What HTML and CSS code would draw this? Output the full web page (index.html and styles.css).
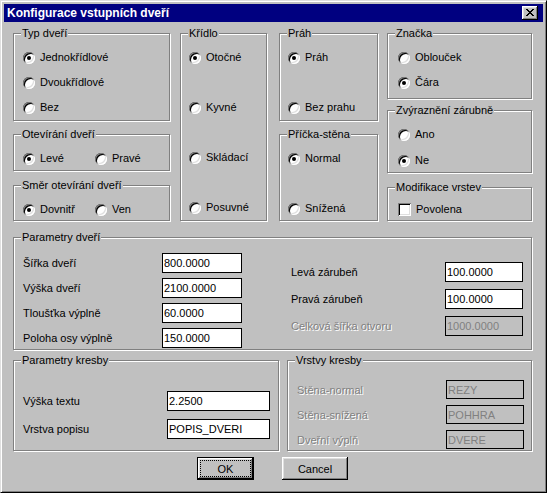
FILE: index.html
```html
<!DOCTYPE html>
<html lang="cs">
<head>
<meta charset="utf-8">
<title>Konfigurace vstupních dveří</title>
<link rel="stylesheet" href="styles.css">
</head>
<body>
<div class="window">
  <div class="titlebar">
    <span class="title">Konfigurace vstupních dveří</span>
    <span class="close">
      <svg width="8" height="7" viewBox="0 0 8 7" shape-rendering="crispEdges">
        <rect x="0" y="0" width="2" height="1"/><rect x="6" y="0" width="2" height="1"/>
        <rect x="1" y="1" width="2" height="1"/><rect x="5" y="1" width="2" height="1"/>
        <rect x="2" y="2" width="4" height="1"/>
        <rect x="3" y="3" width="2" height="1"/>
        <rect x="2" y="4" width="4" height="1"/>
        <rect x="1" y="5" width="2" height="1"/><rect x="5" y="5" width="2" height="1"/>
        <rect x="0" y="6" width="2" height="1"/><rect x="6" y="6" width="2" height="1"/>
      </svg>
    </span>
  </div>

  <div class="content">
    <div class="top">
      <div class="col col1">
        <div class="group g-typ">
          <div class="gt">Typ dveří</div>
          <div class="opts">
            <div class="opt"><span class="radio on"></span>Jednokřídlové</div>
            <div class="opt"><span class="radio"></span>Dvoukřídlové</div>
            <div class="opt"><span class="radio"></span>Bez</div>
          </div>
        </div>
        <div class="group g-otev">
          <div class="gt">Otevírání dveří</div>
          <div class="opts row">
            <div class="opt"><span class="radio on"></span>Levé</div>
            <div class="opt"><span class="radio"></span>Pravé</div>
          </div>
        </div>
        <div class="group g-smer">
          <div class="gt">Směr otevírání dveří</div>
          <div class="opts row">
            <div class="opt"><span class="radio on"></span>Dovnitř</div>
            <div class="opt"><span class="radio"></span>Ven</div>
          </div>
        </div>
      </div>

      <div class="group g-kridlo">
        <div class="gt">Křídlo</div>
        <div class="opts wide narrow">
          <div class="opt"><span class="radio on"></span>Otočné</div>
          <div class="opt"><span class="radio"></span>Kyvné</div>
          <div class="opt"><span class="radio"></span>Skládací</div>
          <div class="opt"><span class="radio"></span>Posuvné</div>
        </div>
      </div>

      <div class="col col3">
        <div class="group g-prah">
          <div class="gt">Práh</div>
          <div class="opts wide narrow">
            <div class="opt"><span class="radio on"></span>Práh</div>
            <div class="opt"><span class="radio"></span>Bez prahu</div>
          </div>
        </div>
        <div class="group g-pricka">
          <div class="gt">Příčka-stěna</div>
          <div class="opts wide narrow">
            <div class="opt"><span class="radio on"></span>Normal</div>
            <div class="opt"><span class="radio"></span>Snížená</div>
          </div>
        </div>
      </div>

      <div class="col col4">
        <div class="group g-znacka">
          <div class="gt">Značka</div>
          <div class="opts roomy">
            <div class="opt"><span class="radio"></span>Oblouček</div>
            <div class="opt"><span class="radio on"></span>Čára</div>
          </div>
        </div>
        <div class="group g-zvyr">
          <div class="gt">Zvýraznění zárubně</div>
          <div class="opts roomy loose">
            <div class="opt"><span class="radio"></span>Ano</div>
            <div class="opt"><span class="radio on"></span>Ne</div>
          </div>
        </div>
        <div class="group g-modif">
          <div class="gt">Modifikace vrstev</div>
          <div class="opts roomy tight">
            <div class="opt"><span class="check"></span>Povolena</div>
          </div>
        </div>
      </div>
    </div>

    <div class="group g-params">
      <div class="gt">Parametry dveří</div>
      <div class="params-body">
        <div class="fields fields-left">
          <div class="field"><span>Šířka dveří</span><input class="edit w80" value="800.0000"></div>
          <div class="field"><span>Výška dveří</span><input class="edit w80" value="2100.0000"></div>
          <div class="field"><span>Tloušťka výplně</span><input class="edit w80" value="60.0000"></div>
          <div class="field"><span>Poloha osy výplně</span><input class="edit w80" value="150.0000"></div>
        </div>
        <div class="fields fields-right">
          <div class="field"><span>Levá zárubeň</span><input class="edit w78" value="100.0000"></div>
          <div class="field"><span>Pravá zárubeň</span><input class="edit w78" value="100.0000"></div>
          <div class="field"><span class="disabled">Celková šířka otvoru</span><input class="edit w78 off" value="1000.0000" disabled></div>
        </div>
      </div>
    </div>

    <div class="bottom">
      <div class="group g-kresby">
        <div class="gt">Parametry kresby</div>
        <div class="fields fields-kresby">
          <div class="field"><span>Výška textu</span><input class="edit w103" value="2.2500"></div>
          <div class="field"><span>Vrstva popisu</span><input class="edit w103" value="POPIS_DVERI"></div>
        </div>
      </div>
      <div class="group g-vrstvy">
        <div class="gt">Vrstvy kresby</div>
        <div class="fields fields-vrstvy">
          <div class="field"><span class="disabled">Stěna-normal</span><input class="edit w78 h19 off" value="REZY" disabled></div>
          <div class="field"><span class="disabled">Stěna-snížená</span><input class="edit w78 h19 off" value="POHHRA" disabled></div>
          <div class="field"><span class="disabled">Dveřní výplň</span><input class="edit w78 h19 off" value="DVERE" disabled></div>
        </div>
      </div>
    </div>

    <div class="buttons">
      <div class="btn btn-default"><span class="focus">OK</span></div>
      <div class="btn btn-cancel">Cancel</div>
    </div>
  </div>
</div>
</body>
</html>
```

FILE: styles.css
```css
* { box-sizing: border-box; }

html, body {
  margin: 0;
  padding: 0;
  background: #c0c0c0;
}

body {
  font-family: "Liberation Sans", Arial, sans-serif;
  font-size: 11px;
  color: #000;
}

.window {
  width: 547px;
  height: 493px;
  background: #c0c0c0;
  border: 1px solid;
  border-color: #dfdfdf #000 #000 #dfdfdf;
  box-shadow: inset 1px 1px 0 #fff, inset -1px -1px 0 #808080;
  padding: 3px;
}

.titlebar {
  height: 18px;
  background: #000080;
  color: #fff;
  display: flex;
  align-items: center;
  justify-content: space-between;
  padding: 0 5px 0 3px;
}

.title {
  font-weight: bold;
  font-size: 12px;
  line-height: 18px;
}

.close {
  width: 16px;
  height: 14px;
  background: #c0c0c0;
  box-shadow: inset -1px -1px 0 #000, inset 1px 1px 0 #fff, inset -2px -2px 0 #808080, inset 2px 2px 0 #dfdfdf;
  display: flex;
  align-items: center;
  justify-content: center;
  padding: 0 0 1px 0;
}

.close svg { display: block; fill: #000; }

.content {
  padding: 11px 0 0 9px;
}

.top {
  display: flex;
  align-items: flex-start;
}

.col {
  display: flex;
  flex-direction: column;
}

.col1 { width: 157px; }
.col3 { width: 99px; margin-left: 12px; }
.col4 { width: 145px; margin-left: 9px; }

/* group box (etched frame) */
.group {
  border: 1px solid #808080;
  box-shadow: inset 1px 1px 0 #fff, 1px 1px 0 #fff;
}

.gt {
  margin: -7px 0 0 7px;
  padding: 0 1px;
  background: #c0c0c0;
  width: fit-content;
  height: 13px;
  line-height: 13px;
  white-space: nowrap;
}

.g-typ { height: 88px; }
.g-otev { height: 37px; margin-top: 13px; }
.g-smer { height: 36px; margin-top: 14px; }
.g-kridlo { width: 87px; height: 188px; margin-left: 10px; }
.g-prah { height: 88px; }
.g-pricka { height: 87px; margin-top: 13px; }
.g-znacka { height: 66px; }
.g-zvyr { height: 63px; margin-top: 11px; }
.g-modif { height: 34px; margin-top: 14px; }

/* option lists */
.opts {
  display: flex;
  flex-direction: column;
  gap: 12px;
  padding: 11px 0 0 9px;
}

.opts.wide { gap: 37px; }
.opts.narrow { padding-left: 8px; }
.opts.roomy { padding-left: 10px; }
.opts.loose { gap: 13px; }
.opts.tight { padding-top: 9px; }

.opts.row {
  flex-direction: row;
  gap: 0;
}

.opts.row .opt:first-child { width: 72px; }

.opt {
  display: flex;
  align-items: center;
  gap: 5px;
  height: 13px;
  line-height: 13px;
  white-space: nowrap;
}

.radio {
  flex: none;
  width: 12px;
  height: 12px;
  border-radius: 50%;
  background: #fff;
  box-shadow: inset 1px 1px 0 #808080, inset -1px -1px 0 #fff, inset 2px 2px 0 #000, inset -2px -2px 0 #dfdfdf;
  display: flex;
  align-items: center;
  justify-content: center;
}

.radio.on::after {
  content: "";
  width: 4px;
  height: 4px;
  border-radius: 50%;
  background: #000;
}

.check {
  flex: none;
  width: 13px;
  height: 13px;
  background: #fff;
  box-shadow: inset 1px 1px 0 #808080, inset -1px -1px 0 #fff, inset 2px 2px 0 #000, inset -2px -2px 0 #dfdfdf;
  margin-right: 0;
}

/* parameter groups */
.g-params {
  width: 519px;
  height: 113px;
  margin-top: 16px;
}

.params-body {
  display: flex;
  padding-left: 9px;
}

.fields {
  display: flex;
  flex-direction: column;
}

.field {
  display: flex;
  align-items: center;
  justify-content: space-between;
  white-space: nowrap;
}

.fields-left { width: 219px; padding-top: 9px; gap: 5px; }
.fields-right { width: 232px; margin-left: 49px; padding-top: 18px; gap: 7px; }

.edit {
  height: 20px;
  border: 1px solid #000;
  background: #fff;
  padding: 0 1px;
  margin: 0;
  font-family: "Liberation Sans", Arial, sans-serif;
  font-size: 11px;
  color: #000;
  outline: none;
  border-radius: 0;
}

.w80 { width: 80px; }
.w78 { width: 78px; }
.w103 { width: 103px; }
.h19 { height: 19px; }

.edit.off {
  background: #c0c0c0;
  color: #808080;
  border-color: #000;
  -webkit-text-fill-color: #808080;
  opacity: 1;
}

.disabled {
  color: #808080;
  text-shadow: 1px 1px 0 #fff;
}

.bottom {
  display: flex;
  margin-top: 10px;
}

.g-kresby { width: 266px; height: 91px; }
.g-vrstvy { width: 245px; height: 91px; margin-left: 8px; }

.fields-kresby { width: 256px; padding: 24px 0 0 9px; gap: 8px; }
.fields-vrstvy { width: 236px; padding: 13px 0 0 9px; gap: 6px; }

/* buttons */
.buttons {
  display: flex;
  margin-top: 6px;
  padding-left: 184px;
}

.btn {
  height: 23px;
  background: #c0c0c0;
  display: flex;
  align-items: center;
  justify-content: center;
}

.btn-default {
  width: 57px;
  border: 1px solid #000;
  box-shadow: inset -1px -1px 0 #000, inset 1px 1px 0 #fff, inset -2px -2px 0 #808080, inset 2px 2px 0 #dfdfdf;
  padding: 2px;
  align-items: stretch;
}

.focus {
  flex: 1;
  border: 1px dotted #000;
  display: flex;
  align-items: center;
  justify-content: center;
}

.btn-cancel {
  width: 66px;
  margin-left: 28px;
  box-shadow: inset -1px -1px 0 #000, inset 1px 1px 0 #fff, inset -2px -2px 0 #808080, inset 2px 2px 0 #dfdfdf;
}
```
